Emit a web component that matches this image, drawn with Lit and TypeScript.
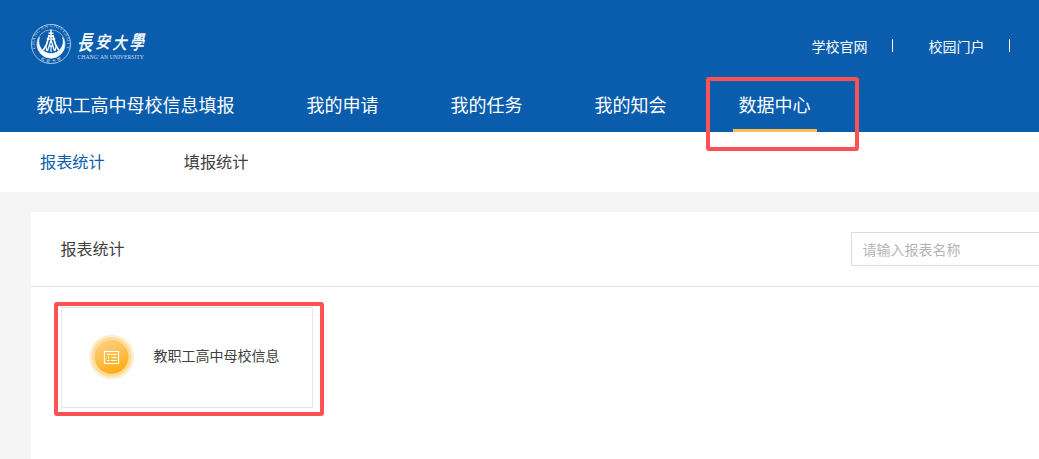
import { LitElement, html, css, svg } from "lit";
import { customElement } from "lit/decorators.js";
import { classMap } from "lit/directives/class-map.js";

@customElement("school-logo")
class SchoolLogo extends LitElement {
  static styles = css`
    :host { display: block; width: 120px; height: 42px; }
    svg { display: block; overflow: visible; }
    text { font-family: "Noto Sans CJK TC", "Noto Sans CJK SC", sans-serif; fill: #fff; }
    .latin { font-family: "Liberation Serif", serif; }
  `;
  render() {
    return html`<svg width="120" height="42" viewBox="30 23 120 42" fill="none" stroke="#fff">
      <defs>
        <path id="ring-top" d="M35.6 48.5A16.2 16.2 0 1 1 66.4 48.5" />
        <path id="ring-bottom" d="M38 57.3A18.4 18.4 0 0 0 64 57.3" />
      </defs>
      <circle cx="51" cy="44" r="19.6" stroke-width=".8" stroke-opacity=".75" />
      <circle cx="51" cy="44" r="14.2" stroke-width=".7" stroke-opacity=".7" />
      <text class="latin" font-size="4.3" stroke="none" fill-opacity=".7" textLength="61" lengthAdjust="spacingAndGlyphs"><textPath href="#ring-top">CHANG'AN UNIVERSITY</textPath></text>
      <text font-size="4.2" stroke="none" fill-opacity=".75" letter-spacing="2"><textPath href="#ring-bottom" startOffset="3">長安大學</textPath></text>
      <path d="M39.3 37.5A13.6 13.6 0 1 0 62.7 37.5A12.3 12.3 0 1 1 39.3 37.5Z" fill="#fff" stroke-width=".7" />
      <path d="M51 29.5V38M48.6 33.2H53.4M48 36H54M46.8 39H55.2" stroke-width="1.5" />
      <path d="M49.2 35L46.6 44.5L43.2 50.2M52.8 35L55.4 44.5L58.8 50.2" stroke-width="1.7" />
      <path d="M51 40L47.5 51M51 40L54.5 51M48.7 46H53.3M45.7 46L47 51M56.3 46L55 51M51 45V52" stroke-width="1.2" />
      ${[
        ["長", 84.6, 50, 15, 1.4], ["安", 102.5, 47.8, 14.5, 1.15], ["大", 119.5, 48.6, 14, 1.2], ["學", 136.6, 49, 14, 1.35],
      ].map(([c, x, y, s, k]) => svg`<text transform=${`translate(${x} ${y}) skewX(-13) scale(1 ${k})`} text-anchor="middle" font-size=${s} stroke-width=".35">${c}</text>`)}
      <text class="latin" x="77.5" y="59" font-size="6" stroke="none" fill-opacity=".8" textLength="66.5" lengthAdjust="spacingAndGlyphs">CHANG' AN UNIVERSITY</text>
    </svg>`;
  }
}

@customElement("report-icon")
class ReportIcon extends LitElement {
  static styles = css`:host { display: block; width: 46px; height: 46px; } svg { display: block; }`;
  render() {
    return html`<svg width="46" height="46" viewBox="0 0 46 46">
      <defs>
        <linearGradient id="g" x1=".3" y1="0" x2=".7" y2="1">
          <stop offset="0" stop-color="#fbd07d" /><stop offset="1" stop-color="#fdab12" />
        </linearGradient>
      </defs>
      <circle cx="22.6" cy="23" r="22.3" fill="#fdedc9" />
      <circle cx="22.6" cy="23" r="19.8" fill="#fcdc9b" />
      <circle cx="22.6" cy="23" r="16.8" fill="url(#g)" />
      <path d="M15.5 17.5H29.5V29.5H15.5Z" fill="none" stroke="#fff" stroke-width="1.2" />
      <path d="M18 20.5H27.5M22.5 23.5H27.5M22 26.5H27.5M19.5 22.8V24.6M18 26.5H20.4" fill="none" stroke="#fff" stroke-width="1.1" />
    </svg>`;
  }
}

@customElement("app-root")
class AppRoot extends LitElement {
  static styles = css`
    :host {
      display: block; position: relative; width: 100%; height: 459px; overflow: hidden;
      background: #f5f5f5; color: #404040;
      font-family: "Noto Sans CJK SC", sans-serif; white-space: nowrap;
    }
    * { box-sizing: border-box; }
    .header { height: 132px; background: #0a5cad; color: #fff; display: flex; flex-direction: column; }
    .top { height: 80px; display: flex; justify-content: space-between; align-items: flex-start; padding: 23px 29px 0 30px; }
    .links { display: flex; font-size: 14px; line-height: 20px; padding-top: 13px; }
    .link { display: flex; align-items: center; padding-left: 35.5px; }
    .link::after { content: ""; width: 1px; height: 13px; margin: -2px 0 0 24.5px; background: #fff; }
    .nav { height: 52px; display: flex; gap: 60px; padding-left: 31px; }
    .tab { padding: 0 6.5px 0 5.5px; height: 52px; line-height: 49px; font-size: 18px; border-bottom: 3px solid transparent; }
    .tab.active { border-color: #fcbf52; }
    .sub { height: 60px; background: #fff; display: flex; gap: 79px; padding-left: 40px; font-size: 16.2px; line-height: 58px; }
    .sub .active { color: #0a5cad; }
    .panel { margin: 20px 0 0 31px; height: 247px; background: #fff; }
    .bar { height: 75px; border-bottom: 1px solid #e4e4e4; display: flex; justify-content: space-between; align-items: center; padding-left: 29.5px; font-size: 16px; }
    .title { margin-top: -2px; }
    .search { width: 188px; height: 34px; border: 1px solid #dcdcdc; border-right: 0; border-radius: 2px 0 0 2px; padding-left: 10.5px; font-size: 14px; line-height: 33px; color: #b4b4b4; }
    .card { width: 252px; height: 101px; margin: 20px 0 0 30px; border: 1px solid #e6e6e6; display: flex; align-items: center; gap: 19px; padding-left: 26.5px; font-size: 14px; }
    .card report-icon { margin-top: -1px; }
    .card span { margin-top: -5px; }
    .mark { position: absolute; border: 4px solid #fd5154; border-radius: 3px; }
    .mark-nav { left: 706px; top: 77px; width: 153px; height: 74px; }
    .mark-card { left: 54px; top: 302px; width: 270px; height: 114px; }
  `;
  render() {
    const tabs = ["教职工高中母校信息填报", "我的申请", "我的任务", "我的知会", "数据中心"];
    return html`
      <div class="header">
        <div class="top">
          <school-logo></school-logo>
          <div class="links">${["学校官网", "校园门户"].map((t) => html`<div class="link">${t}</div>`)}</div>
        </div>
        <div class="nav">${tabs.map((t, i) => html`<div class=${classMap({ tab: true, active: i === 4 })}>${t}</div>`)}</div>
      </div>
      <div class="sub"><div class="active">报表统计</div><div>填报统计</div></div>
      <div class="panel">
        <div class="bar"><div class="title">报表统计</div><div class="search">请输入报表名称</div></div>
        <div class="card"><report-icon></report-icon><span>教职工高中母校信息</span></div>
      </div>
      <div class="mark mark-nav"></div>
      <div class="mark mark-card"></div>
    `;
  }
}
